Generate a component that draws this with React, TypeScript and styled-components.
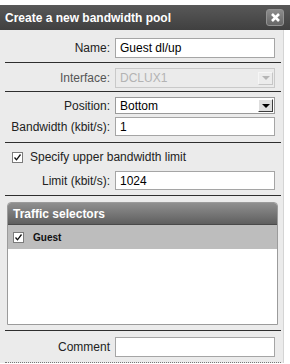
import styled, { createGlobalStyle } from "styled-components";

const GlobalStyle = createGlobalStyle`
  html, body {
    margin: 0;
    padding: 0;
    background: #ffffff;
  }
  body {
    font-family: "Liberation Sans", Arial, sans-serif;
    font-size: 12px;
    color: #000;
  }
`;

const Page = styled.div`
  width: 290px;
  height: 364px;
  overflow: hidden;
  padding-top: 5px;
  box-sizing: border-box;
`;

const TitleBar = styled.div`
  display: flex;
  align-items: center;
  justify-content: space-between;
  height: 25px;
  padding: 0 6px 0 5px;
  background: linear-gradient(#585858, #404040);
  color: #ffffff;
  font-weight: bold;
  font-size: 12px;
`;

const CloseButton = styled.button`
  display: flex;
  align-items: center;
  justify-content: center;
  width: 18px;
  height: 17px;
  padding: 0;
  border: 1px solid #939393;
  border-radius: 3px;
  background: linear-gradient(#8c8c8c, #666666);
`;

const Body = styled.div`
  width: 284px;
  box-sizing: border-box;
  padding: 0 2px 0 5px;
  background: #ebebeb;
  border-right: 1px solid #d4d4d4;
`;

const Section = styled.div<{ $top: number; $bottom: number; $gap?: number; $dotted?: boolean }>`
  display: flex;
  flex-direction: column;
  gap: ${(p) => p.$gap ?? 0}px;
  padding: ${(p) => p.$top}px 0 ${(p) => p.$bottom}px;
  border-bottom: 1px ${(p) => (p.$dotted ? "dotted #777" : "solid #2e2e2e")};
`;

const FieldRow = styled.div`
  display: grid;
  grid-template-columns: 105px 160px;
  column-gap: 5px;
  align-items: center;
`;

const Label = styled.label<{ $muted?: boolean }>`
  text-align: right;
  white-space: nowrap;
  color: ${(p) => (p.$muted ? "#555" : "#222")};
`;

const TextInput = styled.div<{ $h: number }>`
  box-sizing: border-box;
  height: ${(p) => p.$h}px;
  padding: 0 4px;
  display: flex;
  align-items: center;
  background: #ffffff;
  border: 1px solid #a5a5a5;
  font-size: 12px;
  color: #000;
`;

const SelectBox = styled.div<{ $h: number; $disabled?: boolean }>`
  box-sizing: border-box;
  height: ${(p) => p.$h}px;
  display: flex;
  align-items: center;
  justify-content: space-between;
  padding: 0 1px 0 4px;
  background: ${(p) => (p.$disabled ? "#ebebeb" : "#ffffff")};
  border: 1px solid ${(p) => (p.$disabled ? "#c9c9c9" : "#9a9a9a")};
  color: ${(p) => (p.$disabled ? "#b3b3b3" : "#000")};
`;

const ArrowButton = styled.span<{ $disabled?: boolean }>`
  box-sizing: border-box;
  width: 15px;
  height: 13px;
  display: flex;
  align-items: center;
  justify-content: center;
  background: ${(p) => (p.$disabled ? "#ececec" : "#dedede")};
  border: 1px solid;
  border-color: ${(p) =>
    p.$disabled ? "#f6f6f6 #c6c6c6 #c6c6c6 #f6f6f6" : "#ffffff #3c3c3c #3c3c3c #ffffff"};

  &::after {
    content: "";
    border-left: 4px solid transparent;
    border-right: 4px solid transparent;
    border-top: 4px solid ${(p) => (p.$disabled ? "#b5b5b5" : "#000")};
  }
`;

const CheckRow = styled.div`
  display: flex;
  align-items: center;
  gap: 7px;
  height: 12px;
  padding-left: 7px;
  color: #222;
`;

const Box = styled.span`
  box-sizing: border-box;
  width: 11px;
  height: 11px;
  display: flex;
  align-items: center;
  justify-content: center;
  background: #ffffff;
  border: 1px solid #7b7b7b;
`;

const Panel = styled.div`
  margin: 6px 3px 5px 2px;
  display: flex;
  flex-direction: column;
  border: 1px solid #9b9b9b;
  border-radius: 4px 4px 0 0;
  background: #ffffff;
  height: 123px;
  box-sizing: border-box;
  overflow: hidden;
`;

const PanelHeader = styled.div`
  height: 21px;
  display: flex;
  align-items: center;
  padding-left: 5px;
  background: linear-gradient(#8f8f8f, #5f5f5f);
  border-bottom: 1px solid #4a4a4a;
  color: #ffffff;
  font-weight: bold;
  font-size: 12px;
`;

const SelectorRow = styled.div`
  height: 24px;
  display: flex;
  align-items: center;
  gap: 9px;
  padding-left: 5px;
  background: #bdbdbd;
  font-weight: bold;
  font-size: 10px;
  color: #111;
`;

const Check = () => (
  <svg width="9" height="9" viewBox="0 0 9 9">
    <path d="M1.5 4.5 L3.5 6.8 L7.5 1.5" fill="none" stroke="#111" strokeWidth="1.3" />
  </svg>
);

const Checkbox = () => (
  <Box>
    <Check />
  </Box>
);

export default function App() {
  return (
    <Page>
      <GlobalStyle />
      <TitleBar>
        <span>Create a new bandwidth pool</span>
        <CloseButton>
          <svg width="11" height="11" viewBox="0 0 11 11">
            <path d="M2 2 L9 9 M9 2 L2 9" stroke="#fff" strokeWidth="2.6" />
          </svg>
        </CloseButton>
      </TitleBar>
      <Body>
        <Section $top={8} $bottom={4}>
          <FieldRow>
            <Label>Name:</Label>
            <TextInput $h={20}>Guest dl/up</TextInput>
          </FieldRow>
        </Section>
        <Section $top={5} $bottom={3}>
          <FieldRow>
            <Label $muted>Interface:</Label>
            <SelectBox $h={20} $disabled>
              DCLUX1
              <ArrowButton $disabled />
            </SelectBox>
          </FieldRow>
        </Section>
        <Section $top={5} $bottom={6} $gap={3}>
          <FieldRow>
            <Label>Position:</Label>
            <SelectBox $h={17}>
              Bottom
              <ArrowButton />
            </SelectBox>
          </FieldRow>
          <FieldRow>
            <Label>Bandwidth (kbit/s):</Label>
            <TextInput $h={19}>1</TextInput>
          </FieldRow>
        </Section>
        <Section $top={8} $bottom={5} $gap={8}>
          <CheckRow>
            <Checkbox />
            Specify upper bandwidth limit
          </CheckRow>
          <FieldRow>
            <Label>Limit (kbit/s):</Label>
            <TextInput $h={19}>1024</TextInput>
          </FieldRow>
        </Section>
        <Section $top={0} $bottom={0}>
          <Panel>
            <PanelHeader>Traffic selectors</PanelHeader>
            <SelectorRow>
              <Checkbox />
              Guest
            </SelectorRow>
          </Panel>
        </Section>
        <Section $top={6} $bottom={5} $dotted>
          <FieldRow>
            <Label>Comment</Label>
            <TextInput $h={20} />
          </FieldRow>
        </Section>
      </Body>
    </Page>
  );
}
